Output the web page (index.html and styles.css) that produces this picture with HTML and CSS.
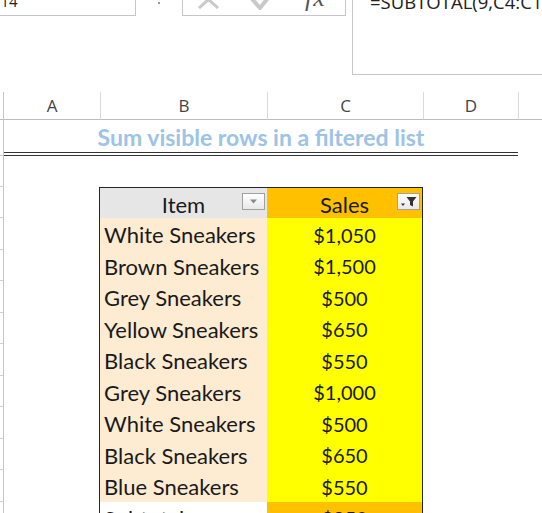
FILE: index.html
```html
<!DOCTYPE html>
<html>
<head>
<meta charset="utf-8">
<link rel="stylesheet" href="styles.css">
</head>
<body>
<div class="app">
  <div class="topbar">
    <div class="bar-inner">
      <div class="namebox">C14</div>
      <div class="grip"><span class="dot"></span></div>
      <div class="btnbox">
        <svg class="ico-x" width="23" height="19" viewBox="0 0 23 19"><path d="M2 1 L21 18 M21 1 L2 18" stroke="#c9c9c9" stroke-width="3" fill="none"/></svg>
        <svg class="ico-ok" width="24" height="21" viewBox="0 0 24 21"><path d="M2 10 L10 19 L22 4" stroke="#c9c9c9" stroke-width="4" fill="none"/></svg>
        <span class="fx">fx</span>
      </div>
      <div class="fbox">=SUBTOTAL(9,C4:C14)</div>
    </div>
  </div>
  <div class="sheet">
    <div class="strip hdr"></div>
    <div class="colhdr">A</div>
    <div class="colhdr sep">B</div>
    <div class="colhdr sep">C</div>
    <div class="colhdr sep">D</div>
    <div class="colhdr sep"></div>

    <div class="strip"></div>
    <div class="title">Sum visible rows in a filtered list</div>
    <div class="blank"></div>

    <div class="strip"></div>
    <div class="blank row-full"></div>

    <div class="strip"></div>
    <div class="blank"></div>
    <div class="th item">Item<span class="fbtn"><svg width="9" height="5" viewBox="0 0 9 5"><path d="M1 0.5 H8 L4.5 4.5 Z" fill="#8a8a8a"/></svg></span></div>
    <div class="th sales">Sales<span class="fbtn"><svg width="18" height="13" viewBox="0 0 18 13"><path d="M1 8.5 H5 L3 11 Z" fill="#333"/><path d="M6.5 2 H16.5 L13 6.5 V11.5 L10 10 V6.5 Z" fill="#333"/></svg></span></div>
    <div class="blank span2"></div>

    <div class="strip"></div><div class="blank"></div><div class="td name">White Sneakers</div><div class="td val">$1,050</div><div class="blank span2"></div>
    <div class="strip"></div><div class="blank"></div><div class="td name">Brown Sneakers</div><div class="td val">$1,500</div><div class="blank span2"></div>
    <div class="strip"></div><div class="blank"></div><div class="td name">Grey Sneakers</div><div class="td val">$500</div><div class="blank span2"></div>
    <div class="strip"></div><div class="blank"></div><div class="td name">Yellow Sneakers</div><div class="td val">$650</div><div class="blank span2"></div>
    <div class="strip"></div><div class="blank"></div><div class="td name">Black Sneakers</div><div class="td val">$550</div><div class="blank span2"></div>
    <div class="strip"></div><div class="blank"></div><div class="td name">Grey Sneakers</div><div class="td val">$1,000</div><div class="blank span2"></div>
    <div class="strip"></div><div class="blank"></div><div class="td name">White Sneakers</div><div class="td val">$500</div><div class="blank span2"></div>
    <div class="strip"></div><div class="blank"></div><div class="td name">Black Sneakers</div><div class="td val">$650</div><div class="blank span2"></div>
    <div class="strip"></div><div class="blank"></div><div class="td name">Blue Sneakers</div><div class="td val">$550</div><div class="blank span2"></div>
    <div class="strip"></div><div class="blank"></div><div class="td name total">Subtotal</div><div class="td val total">$950</div><div class="blank span2"></div>
  </div>
</div>
</body>
</html>
```
FILE: styles.css
```css
html, body { margin: 0; padding: 0; background: #fff; }
body { font-family: Lato, "Open Sans", sans-serif; color: #1a1a1a; }
.app { width: 542px; height: 513px; overflow: hidden; }

.topbar { height: 92px; overflow: hidden; }
.bar-inner { display: flex; align-items: flex-start; margin-top: -12px; margin-left: -12px; width: 600px; }
.namebox {
  width: 148px; height: 28px; box-sizing: border-box; border: 1px solid #c6c6c6;
  font: 15px/20px "Open Sans", sans-serif; padding: 2px 0 0 2px; color: #222; flex: none;
}
.grip { width: 46px; display: flex; justify-content: center; padding-top: 14px; flex: none; }
.dot { width: 2px; height: 2px; background: #9a9a9a; }
.btnbox {
  width: 164px; height: 28px; box-sizing: border-box; border: 1px solid #c6c6c6; flex: none;
  display: flex; align-items: flex-start; overflow: hidden;
}
.ico-x { margin: 1px 0 0 14px; flex: none; }
.ico-ok { margin: 0 0 0 30px; flex: none; }
.fx { margin: -6px 0 0 31px; font: italic 26px/30px "Liberation Serif", serif; color: #555; letter-spacing: 1px; flex: none; }
.fbox {
  margin-left: 6px; width: 230px; flex: none; height: 87px; box-sizing: border-box; border: 1px solid #c6c6c6; border-right: none;
  font: 18.5px/24px "Open Sans", sans-serif; color: #222; padding: 1px 0 0 17px; white-space: nowrap;
}

.sheet {
  display: grid;
  grid-template-columns: 4px 96px 167px 156px 95px 1fr;
  grid-template-rows: 28px 36px 31px 31px repeat(10, 31.5px);
}
.strip { border-right: 1px solid #c6c6c6; border-bottom: 1px solid #d0d0d0; box-sizing: border-box; }
.strip.hdr { border-bottom: 1px solid #bdbdbd; }
.colhdr {
  display: flex; align-items: center; justify-content: center;
  font: 17px "Open Sans", sans-serif; color: #444; border-bottom: 1px solid #bdbdbd; box-sizing: border-box;
}
.colhdr.sep { border-left: 1px solid #dadada; }

.title {
  grid-column: 2 / 6; border-bottom: 4px double #333; box-sizing: border-box;
  display: flex; justify-content: center; align-items: flex-end;
  font-weight: 700; font-size: 23px; line-height: 1.2; color: #9dc3e6;
}
.blank { grid-column: span 1; }
.blank.span2 { grid-column: span 2; }
.blank.row-full { grid-column: 2 / 7; }

.th, .td { display: flex; align-items: center; box-sizing: border-box; font-size: 22px; color: #1a1a1a; padding-top: 2px; }
.td.val { font-size: 20px; }
.th { justify-content: center; border-top: 1px solid #262626; position: relative; }
.th.item { background: #e7e6e6; border-left: 1px solid #262626; margin-left: -1px; }
.th.sales { background: #ffc000; border-right: 1px solid #262626; }
.fbtn {
  position: absolute; right: 2px; top: 5px; width: 23px; height: 17px; box-sizing: border-box;
  border: 1px solid #a0a0a0; background: linear-gradient(#ffffff, #e9e9e9);
  display: flex; align-items: center; justify-content: center;
}
.td.name { background: #fdebd2; padding-left: 4px; border-left: 1px solid #262626; margin-left: -1px; white-space: nowrap; }
.td.val { background: #ffff00; justify-content: center; border-right: 1px solid #262626; }
.td.name.total { background: #fff; }
.td.val.total { background: #ffc000; }
```
